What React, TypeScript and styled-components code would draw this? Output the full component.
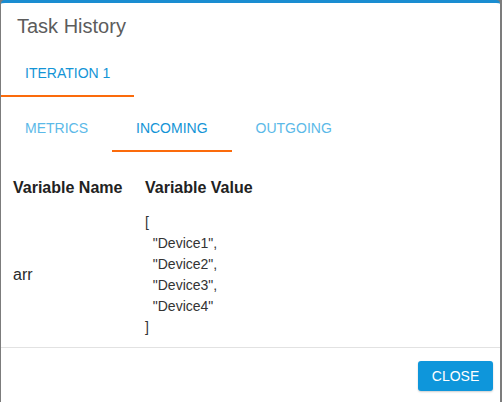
import React, { useState } from 'react';
import styled, { createGlobalStyle } from 'styled-components';

const GlobalStyle = createGlobalStyle`
  html, body {
    margin: 0;
    padding: 0;
    background: #7c7c7c;
    font-family: "Liberation Sans", Arial, Helvetica, sans-serif;
  }
`;

const Dialog = styled.div`
  box-sizing: border-box;
  width: 499px;
  height: 402px;
  margin-left: 1px;
  background: #fff;
  border-top: 3px solid #1a8dd1;
  border-radius: 4px 4px 0 0;
  display: flex;
  flex-direction: column;
  overflow: hidden;
`;

const Title = styled.h2`
  margin: 0;
  padding: 11px 16px;
  font-size: 20px;
  line-height: 24px;
  font-weight: 400;
  color: #5c5c5c;
`;

const TabBar = styled.div<{ $gap?: number }>`
  display: flex;
  height: 48px;
  margin-top: ${(p) => p.$gap ?? 0}px;
`;

const Tab = styled.button<{ $active?: boolean }>`
  box-sizing: border-box;
  height: 48px;
  padding: 2px 24px 0;
  border: 0;
  border-bottom: 2px solid ${(p) => (p.$active ? '#fb6b0c' : 'transparent')};
  background: none;
  font-family: inherit;
  font-size: 14px;
  color: ${(p) => (p.$active ? '#1394d6' : '#5bb9e8')};
  cursor: pointer;
`;

const Table = styled.div`
  display: grid;
  grid-template-columns: 132px auto;
  row-gap: 14px;
  align-items: center;
  padding: 26px 12px 9px;
  color: #222;
`;

const HeadCell = styled.div`
  font-size: 16px;
  line-height: 20px;
  font-weight: 700;
`;

const NameCell = styled.div`
  font-size: 16px;
  color: #2a2a2a;
`;

const ValueCell = styled.pre`
  margin: 0;
  font-family: inherit;
  font-size: 14px;
  line-height: 21px;
  color: #333;
`;

const Footer = styled.div`
  display: flex;
  justify-content: flex-end;
  border-top: 1px solid #e2e2e2;
  padding: 13px 7px 0;
`;

const CloseButton = styled.button`
  width: 75px;
  height: 30px;
  border: 0;
  border-radius: 3px;
  background: #0e96db;
  color: #fff;
  font-family: inherit;
  font-size: 14px;
  box-shadow: 0 1px 2px rgba(0, 0, 0, 0.2);
  cursor: pointer;
`;

const variables = [
  { name: 'arr', value: ['Device1', 'Device2', 'Device3', 'Device4'] },
];

const formatValue = (v: string[]) =>
  '[\n' + v.map((s, i) => `  "${s}"${i < v.length - 1 ? ',' : ''}`).join('\n') + '\n]';

export default function App() {
  const [tab, setTab] = useState('INCOMING');

  return (
    <>
      <GlobalStyle />
      <Dialog>
        <Title>Task History</Title>
        <TabBar>
          <Tab $active>ITERATION 1</Tab>
        </TabBar>
        <TabBar $gap={7}>
          {['METRICS', 'INCOMING', 'OUTGOING'].map((t) => (
            <Tab key={t} $active={tab === t} onClick={() => setTab(t)}>
              {t}
            </Tab>
          ))}
        </TabBar>
        <Table>
          <HeadCell>Variable Name</HeadCell>
          <HeadCell>Variable Value</HeadCell>
          {variables.map((v) => (
            <React.Fragment key={v.name}>
              <NameCell>{v.name}</NameCell>
              <ValueCell>{formatValue(v.value)}</ValueCell>
            </React.Fragment>
          ))}
        </Table>
        <Footer>
          <CloseButton>CLOSE</CloseButton>
        </Footer>
      </Dialog>
    </>
  );
}
